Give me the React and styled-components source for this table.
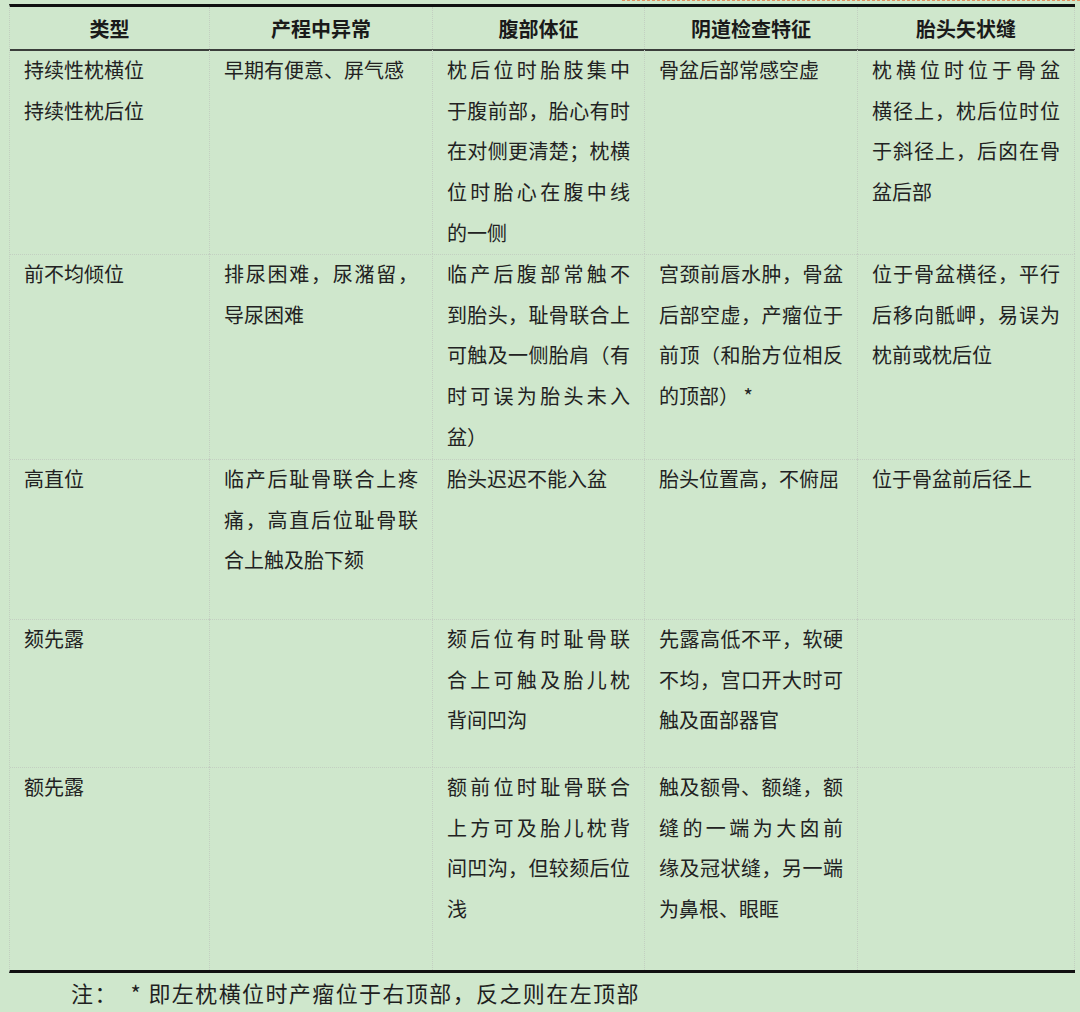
import React from 'react';
import styled, { createGlobalStyle } from 'styled-components';

const GlobalStyle = createGlobalStyle`
	html, body {
		margin: 0;
		padding: 0;
		background: #cfe7cc;
	}
	body {
		font-family: "Noto Sans CJK SC", "Noto Sans", sans-serif;
		color: #1f1f1f;
	}
`;

const COLUMNS = '200px 223px 212px 213px 217px';

const headers = ['类型', '产程中异常', '腹部体征', '阴道检查特征', '胎头矢状缝'];

// each cell is a list of lines, as they break in the source
const rows = [
	{
		height: 204,
		cells: [
			{ lines: ['持续性枕横位', '持续性枕后位'], plain: true },
			{ lines: ['早期有便意、屏气感'] },
			{ lines: ['枕后位时胎肢集中', '于腹前部，胎心有时', '在对侧更清楚；枕横', '位时胎心在腹中线', '的一侧'] },
			{ lines: ['骨盆后部常感空虚'] },
			{ lines: ['枕横位时位于骨盆', '横径上，枕后位时位', '于斜径上，后囟在骨', '盆后部'] },
		],
	},
	{
		height: 205,
		cells: [
			{ lines: ['前不均倾位'] },
			{ lines: ['排尿困难，尿潴留，', '导尿困难'] },
			{ lines: ['临产后腹部常触不', '到胎头，耻骨联合上', '可触及一侧胎肩（有', '时可误为胎头未入', '盆）'] },
			{ lines: ['宫颈前唇水肿，骨盆', '后部空虚，产瘤位于', '前顶（和胎方位相反', '的顶部） *'] },
			{ lines: ['位于骨盆横径，平行', '后移向骶岬，易误为', '枕前或枕后位'] },
		],
	},
	{
		height: 160,
		cells: [
			{ lines: ['高直位'] },
			{ lines: ['临产后耻骨联合上疼', '痛，高直后位耻骨联', '合上触及胎下颏'] },
			{ lines: ['胎头迟迟不能入盆'] },
			{ lines: ['胎头位置高，不俯屈'] },
			{ lines: ['位于骨盆前后径上'] },
		],
	},
	{
		height: 148,
		cells: [
			{ lines: ['颏先露'] },
			{ lines: [] },
			{ lines: ['颏后位有时耻骨联', '合上可触及胎儿枕', '背间凹沟'] },
			{ lines: ['先露高低不平，软硬', '不均，宫口开大时可', '触及面部器官'] },
			{ lines: [] },
		],
	},
	{
		height: 202,
		cells: [
			{ lines: ['额先露'] },
			{ lines: [] },
			{ lines: ['额前位时耻骨联合', '上方可及胎儿枕背', '间凹沟，但较颏后位', '浅'] },
			{ lines: ['触及额骨、额缝，额', '缝的一端为大囟前', '缘及冠状缝，另一端', '为鼻根、眼眶'] },
			{ lines: [] },
		],
	},
];

const Page = styled.div`
	width: 1080px;
	min-height: 1012px;
	box-sizing: border-box;
	padding: 0 5px 0 9px;
	background: #cfe7cc;
	overflow: hidden;
`;

const TopDash = styled.div`
	margin-left: 613px;
	margin-right: -5px;
	height: 0;
	border-top: 1px dashed #e58c5c;
	margin-bottom: 3px;
`;

const Table = styled.div`
	border-top: 3px solid #111;
	border-bottom: 3px solid #111;
	border-left: 1px dotted #c2cfc0;
`;

const Row = styled.div`
	display: grid;
	grid-template-columns: ${COLUMNS};
	height: ${(p) => p.$height}px;
	box-sizing: border-box;
	border-bottom: ${(p) => (p.$last ? 'none' : '1px dotted #c3cfc1')};
`;

const HeaderRow = styled(Row)`
	border-bottom: 2px solid #3a3d3a;
`;

const HeadCell = styled.div`
	display: flex;
	align-items: center;
	justify-content: center;
	font-size: 20px;
	font-weight: 700;
	color: #1a1a1a;
	border-right: 1px dotted #c3cfc1;
`;

const Cell = styled.div`
	box-sizing: border-box;
	padding: 0 14px 0 14px;
	border-right: 1px dotted #c3cfc1;
	font-size: 20px;
	line-height: 40.7px;
	color: #222;
	margin-top: -1px;
`;

const Line = styled.div`
	white-space: nowrap;
	text-align: ${(p) => (p.$justify ? 'justify' : 'left')};
	text-align-last: ${(p) => (p.$justify ? 'justify' : 'left')};
`;

const Note = styled.div`
	margin-top: 5px;
	padding-left: 62px;
	font-size: 22px;
	letter-spacing: 1.4px;
	line-height: 28px;
	color: #1f1f1f;
	white-space: pre;
`;

const TableCell = ({ lines, plain }) => (
	<Cell>
		{lines.map((text, i) => (
			<Line key={i} $justify={!plain && i < lines.length - 1}>
				{text}
			</Line>
		))}
	</Cell>
);

export default function App() {
	return (
		<Page>
			<GlobalStyle />
			<TopDash />
			<Table>
				<HeaderRow $height={44}>
					{headers.map((h) => (
						<HeadCell key={h}>{h}</HeadCell>
					))}
				</HeaderRow>
				{rows.map((row, i) => (
					<Row key={i} $height={row.height} $last={i === rows.length - 1}>
						{row.cells.map((c, j) => (
							<TableCell key={j} lines={c.lines} plain={c.plain} />
						))}
					</Row>
				))}
			</Table>
			<Note>{'注：  * 即左枕横位时产瘤位于右顶部，反之则在左顶部'}</Note>
		</Page>
	);
}
